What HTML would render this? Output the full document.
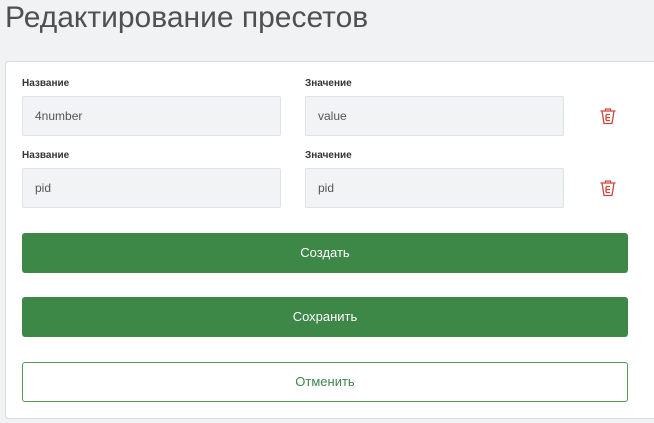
<!DOCTYPE html>
<html><head><meta charset="utf-8"><style>
*{box-sizing:border-box;margin:0;padding:0}
body{width:654px;height:423px;background:#f1f2f4;font-family:"Liberation Sans",sans-serif;position:relative;overflow:hidden}
h1{position:absolute;left:5px;top:1px;font-size:30px;font-weight:normal;color:#505050;white-space:nowrap}
.card{position:absolute;left:5px;top:61px;width:660px;height:358px;background:#fff;border:1px solid #dcdde0;border-radius:4px}
.lbl{position:absolute;font-size:10px;font-weight:bold;color:#333}
.inp{position:absolute;height:40px;width:259px;background:#f2f3f5;border:1px solid #e1e2e5;border-radius:2px;font-size:12px;color:#555;padding:12px 0 0 12px}
.btn{position:absolute;left:22px;width:606px;height:40px;border-radius:3px;background:#3d8747;color:#fff;font-size:13px;text-align:center;line-height:40px}
.out{background:#fff;border:1px solid #4f9a5a;color:#3d8747;line-height:38px}
.tr{position:absolute;left:599px;width:18px;height:18px}
</style></head><body>
<h1>Редактирование пресетов</h1>
<div class="card"></div>
<div class="lbl" style="left:22px;top:78px">Название</div>
<div class="lbl" style="left:305px;top:78px">Значение</div>
<div class="inp" style="left:22px;top:96px">4number</div>
<div class="inp" style="left:305px;top:96px">value</div>
<div class="lbl" style="left:22px;top:150px">Название</div>
<div class="lbl" style="left:305px;top:150px">Значение</div>
<div class="inp" style="left:22px;top:168px">pid</div>
<div class="inp" style="left:305px;top:168px">pid</div>
<svg class="tr" style="top:107px" viewBox="0 0 18 18" fill="none" stroke="#c9473f" stroke-width="1.3"><path d="M1.5 4h15M6.5 4V2h5v2M3 4l2 12.5h8L15 4M7 7.5h4M7 10.5h4M7 13.5h4M7 7.5v6"/></svg>
<svg class="tr" style="top:179px" viewBox="0 0 18 18" fill="none" stroke="#c9473f" stroke-width="1.3"><path d="M1.5 4h15M6.5 4V2h5v2M3 4l2 12.5h8L15 4M7 7.5h4M7 10.5h4M7 13.5h4M7 7.5v6"/></svg>
<div class="btn" style="top:233px">Создать</div>
<div class="btn" style="top:297px">Сохранить</div>
<div class="btn out" style="top:362px">Отменить</div>
</body></html>
